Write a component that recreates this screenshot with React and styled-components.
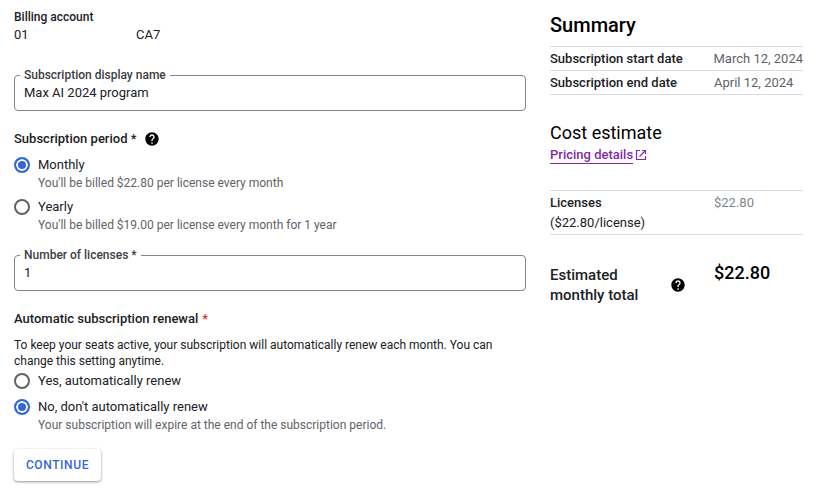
import styled, { createGlobalStyle } from "styled-components";
import { MdHelp } from "react-icons/md";

const GlobalStyle = createGlobalStyle`
  html, body {
    margin: 0;
    padding: 0;
    background: #fff;
    font-family: Roboto, "Liberation Sans", sans-serif;
    color: #202124;
  }
`;

const Page = styled.div`
  display: flex;
  gap: 24px;
  width: 831px;
  height: 495px;
  padding: 9px 0 0 14px;
  box-sizing: border-box;
  overflow: hidden;
`;

const FormColumn = styled.div`
  width: 512px;
  display: flex;
  flex-direction: column;
`;

const SummaryColumn = styled.div`
  width: 253px;
  display: flex;
  flex-direction: column;
`;

const SmallLabel = styled.div`
  font-size: 12px;
  line-height: 16px;
  font-weight: 500;
`;

const AccountValue = styled.div`
  display: flex;
  font-size: 13px;
  line-height: 18px;
  margin-top: 1px;

  span:first-child {
    width: 122px;
  }
`;

const Field = styled.div`
  position: relative;
  height: 36px;
  margin-top: ${(p) => p.$top}px;
  border: 1px solid #80868b;
  border-radius: 4px;
  box-sizing: border-box;
  padding: 8px 9px 0;
  font-size: 13px;
  line-height: 18px;
`;

const FieldLabel = styled.label`
  position: absolute;
  top: -9px;
  left: 5px;
  padding: 0 4px;
  background: #fff;
  font-size: 12px;
  line-height: 16px;
  font-weight: 500;
  color: #3c4043;
`;

const SectionTitle = styled.div`
  display: flex;
  align-items: center;
  font-size: 13px;
  line-height: 20px;
  font-weight: 500;
  margin-top: ${(p) => p.$top}px;

  svg {
    margin-left: 8px;
  }
`;

const Required = styled.span`
  color: #d93025;
  margin-left: 4px;
`;

const RadioRow = styled.div`
  display: flex;
  gap: 8px;
  margin-top: ${(p) => p.$top}px;
`;

const RadioDot = styled.span`
  flex: none;
  width: 16px;
  height: 16px;
  margin-top: 1px;
  box-sizing: border-box;
  border-radius: 50%;
  border: 2px solid ${(p) => (p.$on ? "#3367d6" : "#5f6368")};
  background: ${(p) => (p.$on ? "#3367d6" : "#fff")};
  box-shadow: ${(p) => (p.$on ? "inset 0 0 0 2px #fff" : "none")};
`;

const RadioText = styled.div`
  font-size: 13px;
  line-height: 18px;
`;

const Hint = styled.div`
  font-size: 12px;
  line-height: 18px;
  color: #5f6368;
`;

const Paragraph = styled.p`
  margin: 8px 0 0;
  font-size: 12px;
  line-height: 16px;
  color: #202124;
`;

const ContinueButton = styled.button`
  align-self: flex-start;
  margin-top: 15px;
  width: 87px;
  height: 32px;
  padding: 0;
  border: 0;
  border-radius: 4px;
  background: #fff;
  color: #3367d6;
  font: 500 12px Roboto, sans-serif;
  letter-spacing: 0.6px;
  box-shadow: 0 1px 3px rgba(60, 64, 67, 0.4), 0 1px 2px rgba(60, 64, 67, 0.2);
`;

const SummaryTitle = styled.h2`
  margin: 4px 0 0;
  font-size: 20px;
  line-height: 24px;
  font-weight: 500;
  color: #000;
`;

const DateTable = styled.div`
  margin-top: 9px;
  border-top: 1px solid #dadce0;
`;

const DateRow = styled.div`
  display: flex;
  height: 24px;
  box-sizing: border-box;
  align-items: center;
  border-bottom: 1px solid #dadce0;
`;

const RowLabel = styled.span`
  width: 164px;
  font-size: 13px;
  font-weight: 500;
`;

const RowValue = styled.span`
  font-size: 13px;
  color: #5f6368;
  white-space: nowrap;
`;

const CostTitle = styled.h3`
  margin: 26px 0 0;
  font-size: 18px;
  line-height: 24px;
  font-weight: 400;
  color: #000;
`;

const PricingLink = styled.a`
  display: flex;
  align-items: center;
  gap: 2px;
  margin-top: 2px;
  font-size: 13px;
  line-height: 16px;
  font-weight: 500;
  color: #8228ab;

  span {
    border-bottom: 1px solid #8228ab;
  }

  svg {
    margin-bottom: 2px;
  }
`;

const LicenseRow = styled.div`
  display: flex;
  margin-top: 26px;
  height: 45px;
  box-sizing: border-box;
  padding-top: 2px;
  border-top: 1px solid #dadce0;
  border-bottom: 1px solid #dadce0;
`;

const LicenseLabel = styled.div`
  width: 164px;
  font-size: 13px;
  line-height: 20px;
  font-weight: 500;

  small {
    display: block;
    font-size: 13px;
    font-weight: 400;
  }
`;

const LicenseValue = styled.div`
  font-size: 13px;
  line-height: 20px;
  color: #80868b;
`;

const TotalRow = styled.div`
  display: flex;
  margin-top: 30px;
`;

const TotalLabel = styled.div`
  display: flex;
  align-items: center;
  width: 164px;
  font-size: 15px;
  line-height: 20px;
  font-weight: 500;

  span {
    width: 120px;
  }
`;

const TotalValue = styled.div`
  font-size: 18px;
  line-height: 20px;
  font-weight: 500;
  color: #000;
  margin-top: -2px;
`;

function ExternalIcon() {
  return (
    <svg width="12" height="12" viewBox="0 0 12 12" fill="none" stroke="currentColor" strokeWidth="1.2">
      <path d="M5 1.5H1.5V10.5H10.5V7" />
      <path d="M4.5 7.5L10.5 1.5M7 1.5H10.5V5" />
    </svg>
  );
}

export default function App() {
  return (
    <>
      <GlobalStyle />
      <Page>
        <FormColumn>
          <SmallLabel>Billing account</SmallLabel>
          <AccountValue>
            <span>01</span>
            <span>CA7</span>
          </AccountValue>

          <Field $top={31}>
            <FieldLabel>Subscription display name</FieldLabel>
            Max AI 2024 program
          </Field>

          <SectionTitle $top={18}>
            Subscription period *
            <MdHelp size={16} color="#000" />
          </SectionTitle>

          <RadioRow $top={7}>
            <RadioDot $on />
            <div>
              <RadioText>Monthly</RadioText>
              <Hint>You'll be billed $22.80 per license every month</Hint>
            </div>
          </RadioRow>
          <RadioRow $top={6}>
            <RadioDot />
            <div>
              <RadioText>Yearly</RadioText>
              <Hint>You'll be billed $19.00 per license every month for 1 year</Hint>
            </div>
          </RadioRow>

          <Field $top={21}>
            <FieldLabel>Number of licenses *</FieldLabel>
            1
          </Field>

          <SectionTitle $top={18}>
            Automatic subscription renewal
            <Required>*</Required>
          </SectionTitle>

          <Paragraph>
            To keep your seats active, your subscription will automatically renew each month. You can
            change this setting anytime.
          </Paragraph>

          <RadioRow $top={3}>
            <RadioDot />
            <RadioText>Yes, automatically renew</RadioText>
          </RadioRow>
          <RadioRow $top={8}>
            <RadioDot $on />
            <div>
              <RadioText>No, don't automatically renew</RadioText>
              <Hint>Your subscription will expire at the end of the subscription period.</Hint>
            </div>
          </RadioRow>

          <ContinueButton>CONTINUE</ContinueButton>
        </FormColumn>

        <SummaryColumn>
          <SummaryTitle>Summary</SummaryTitle>
          <DateTable>
            <DateRow>
              <RowLabel>Subscription start date</RowLabel>
              <RowValue>March 12, 2024</RowValue>
            </DateRow>
            <DateRow>
              <RowLabel>Subscription end date</RowLabel>
              <RowValue>April 12, 2024</RowValue>
            </DateRow>
          </DateTable>

          <CostTitle>Cost estimate</CostTitle>
          <PricingLink>
            <span>Pricing details</span>
            <ExternalIcon />
          </PricingLink>

          <LicenseRow>
            <LicenseLabel>
              Licenses
              <small>($22.80/license)</small>
            </LicenseLabel>
            <LicenseValue>$22.80</LicenseValue>
          </LicenseRow>

          <TotalRow>
            <TotalLabel>
              <span>
                Estimated
                <br />
                monthly total
              </span>
              <MdHelp size={16} color="#000" />
            </TotalLabel>
            <TotalValue>$22.80</TotalValue>
          </TotalRow>
        </SummaryColumn>
      </Page>
    </>
  );
}
